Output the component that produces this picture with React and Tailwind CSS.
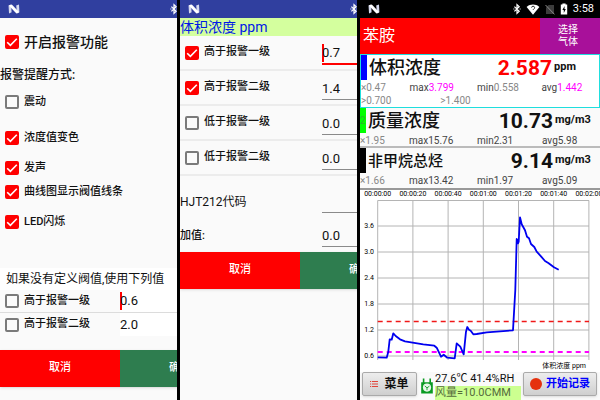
import React from 'react';
import { clsx } from 'clsx';

/* ---------- icons ---------- */

function NougatIcon() {
  return (
    <svg viewBox="0 0 12 10" className="h-[10px] w-3 shrink-0" aria-hidden="true">
      <path d="M0.5 1.6 3 0.6 3.6 8.2 1 9.4Z" fill="#d5d9ee" />
      <path d="M8.2 1.6 11 0.6 11.4 8.2 9 9.4Z" fill="#d5d9ee" />
      <path d="M0.8 1.4 3.8 0.4 11.2 8.2 8.4 9.5Z" fill="#ffffff" />
    </svg>
  );
}

function BluetoothIcon() {
  return (
    <svg viewBox="0 0 8 12" className="h-3 w-2 shrink-0" fill="none" stroke="#fff" strokeWidth="1.2" aria-hidden="true">
      <path d="M1.4 3.6 6.2 8.2 4 10.4V1.6L6.2 3.8 1.4 8.4" />
      <path d="M0.4 6h1M6.6 6h1" />
    </svg>
  );
}

function WifiIcon() {
  return (
    <svg viewBox="0 0 14 11" className="h-[11px] w-[14px]" aria-hidden="true">
      <path d="M0.6 3C4.4-0.2 9.6-0.2 13.4 3L7 10.8Z" fill="#fff" />
      <path d="M5.6 3.6a1.5 1.5 0 1 1 2 1.5L7 5.8" stroke="#000" strokeWidth="0.8" fill="none" />
    </svg>
  );
}

function NoSimIcon() {
  return (
    <svg viewBox="0 0 10 11" className="h-[11px] w-[10px]" aria-hidden="true">
      <path d="M3.5 1H9v9H1V3.5Z" fill="#3c3c3c" />
      <path d="M0.5 1 9.5 10.4" stroke="#8a8a8a" strokeWidth="1" />
    </svg>
  );
}

function BatteryIcon() {
  return (
    <svg viewBox="0 0 8 12" className="h-3 w-2" aria-hidden="true">
      <path d="M2.4 0.6h3.2v1H7.2v10H0.8v-10h1.6Z" fill="#fff" />
      <path d="M4.6 3 2.4 7h1.4v3L5.8 6H4.5Z" fill="#000" />
    </svg>
  );
}

function ListIcon() {
  return (
    <svg viewBox="0 0 8 8" className="h-2 w-2" stroke="#e0443a" strokeWidth="1" aria-hidden="true">
      <path d="M0 1.5h1.2M2 1.5h6M0 4h1.2M2 4h6M0 6.5h1.2M2 6.5h6" />
    </svg>
  );
}

function ClockDeviceIcon() {
  return (
    <svg viewBox="0 0 14 16" className="h-4 w-[14px] shrink-0" aria-hidden="true">
      <path d="M2.8 0.5h1.6v3.7h5V0.5H11v3.7h1.8v11.3H1.2V4.2h1.6Z" fill="#0a9a22" />
      <circle cx="7" cy="9.6" r="4.1" fill="#e9f7ea" />
      <path d="M4.8 8 7 9.8 9.4 8.2M7 9.8v2.4" stroke="#0a9a22" strokeWidth="0.9" fill="none" />
    </svg>
  );
}

/* ---------- shared parts ---------- */

function DialogStatusBar() {
  return (
    <div className="flex h-[18px] items-center bg-[#303f9f] pl-2">
      <NougatIcon />
      <span className="ml-[150px] flex">
        <BluetoothIcon />
      </span>
    </div>
  );
}

function CheckBox({ id, label, checked, large }) {
  return (
    <label htmlFor={id} className={clsx('flex items-center gap-[5px] font-medium', large ? 'text-[14px]' : 'text-[11px]')}>
      <span className="grid">
        <input
          id={id}
          type="checkbox"
          defaultChecked={checked}
          className="peer col-start-1 row-start-1 h-[14px] w-[14px] appearance-none rounded-xs border-2 border-[#7a7a7a] checked:border-[#ff0000] checked:bg-[#ff0000]"
        />
        <svg
          viewBox="0 0 14 14"
          className="pointer-events-none invisible col-start-1 row-start-1 h-[14px] w-[14px] peer-checked:visible"
          fill="none"
          stroke="#fff"
          strokeWidth="1.6"
          aria-hidden="true"
        >
          <path d="M2.2 7.2 5.4 10.3 11.8 3.8" />
        </svg>
      </span>
      {label}
    </label>
  );
}

function NumberField({ label, value, focused, className }) {
  return (
    <div className={clsx('flex min-w-0 flex-1 items-center', className)}>
      {focused && <span className="-mr-[2px] h-[18px] w-[2px] shrink-0 bg-[#ff0000]" />}
      <input
        type="text"
        aria-label={label}
        defaultValue={value}
        className="w-full min-w-0 bg-transparent text-[13px] leading-[18px] text-[#111] outline-none"
      />
    </div>
  );
}

function DialogButtons() {
  return (
    <div className="flex h-[37px] text-[11px] font-medium text-white shadow-sm">
      <button type="button" className="flex-1 bg-[#ff0000]">取消</button>
      <button type="button" className="flex-1 bg-[#2e7d4f]">确定</button>
    </div>
  );
}

/* ---------- alarm settings ---------- */

function AlarmSettings() {
  return (
    <section className="overflow-hidden bg-[#fafafa]">
      <div className="w-[240px]">
        <DialogStatusBar />
        <div className="flex h-12 items-center pl-[5px]">
          <CheckBox id="enable" label="开启报警功能" checked large />
        </div>
        <h2 className="h-[18px] text-[12px] leading-[18px] font-medium">报警提醒方式:</h2>
        <div className="flex h-9 items-center pl-[5px]">
          <CheckBox id="vibrate" label="震动" />
        </div>
        <div className="flex h-9 items-center pl-[5px]">
          <CheckBox id="color" label="浓度值变色" checked />
        </div>
        <div className="flex h-6 items-center pl-[5px]">
          <CheckBox id="sound" label="发声" checked />
        </div>
        <div className="flex h-6 items-center pl-[5px]">
          <CheckBox id="lines" label="曲线图显示阀值线条" checked />
        </div>
        <div className="flex h-9 items-center pl-[5px]">
          <CheckBox id="led" label="LED闪烁" checked />
        </div>

        <p className="mt-7 h-[22px] bg-white pl-[6px] text-[12px] leading-[22px]">如果没有定义阀值,使用下列值</p>
        <div className="flex h-[23px] items-center border-b border-[#dcdcdc] pl-[5px]">
          <div className="w-[115px]">
            <CheckBox id="default-high1" label="高于报警一级" />
          </div>
          <NumberField label="高于报警一级" value="0.6" focused className="h-full bg-white" />
        </div>
        <div className="mb-[14px] flex h-[23px] items-center pl-[5px]">
          <div className="w-[115px]">
            <CheckBox id="default-high2" label="高于报警二级" />
          </div>
          <NumberField label="高于报警二级" value="2.0" className="h-full bg-white" />
        </div>
        <DialogButtons />
      </div>
    </section>
  );
}

/* ---------- channel settings ---------- */

const LIMITS = [
  { id: 'high1', label: '高于报警一级', value: '0.7', checked: true, focused: true },
  { id: 'high2', label: '高于报警二级', value: '1.4', checked: true },
  { id: 'low1', label: '低于报警一级', value: '0.0' },
  { id: 'low2', label: '低于报警二级', value: '0.0' },
];

function ChannelSettings() {
  return (
    <section className="overflow-hidden bg-[#fafafa]">
      <div className="w-[240px]">
        <DialogStatusBar />
        <h2 className="h-[18px] bg-[#d4ff9e] text-[14px] leading-[18px] text-[#0019e6]">体积浓度 ppm</h2>
        {LIMITS.map((row) => (
          <div key={row.id} className="flex h-[35px] items-center border-b-2 border-[#ececec] pl-[5px]">
            <div className="w-[137px]">
              <CheckBox id={row.id} label={row.label} checked={row.checked} />
            </div>
            <NumberField
              label={row.label}
              value={row.value}
              focused={row.focused}
              className={clsx('mt-[3px] h-[22px]', row.focused ? 'border-b-2 border-[#ff0000]' : 'border-b border-[#8a8a8a]')}
            />
          </div>
        ))}
        <div className="flex h-[37px] items-end">
          <span className="w-[142px] pb-[2px] text-[12px] leading-[18px]">HJT212代码</span>
          <NumberField label="HJT212代码" value="" className="h-[22px] border-b border-[#8a8a8a]" />
        </div>
        <div className="mb-[5px] flex h-[34px] items-end">
          <span className="w-[142px] pb-[2px] text-[11px] leading-[18px] font-medium">加值:</span>
          <NumberField label="加值" value="0.0" className="h-[22px] border-b border-[#8a8a8a]" />
        </div>
        <DialogButtons />
      </div>
    </section>
  );
}

/* ---------- live monitor ---------- */

function Stats({ cf, max, min, avg, highlight }) {
  const color = highlight ? 'text-[#f0f]' : '';
  return (
    <div className="mt-px grid h-[14px] grid-cols-[49fr_68fr_65fr_58fr] text-[10px] leading-[14px] text-[#444]">
      <span className="text-[#888]">×{cf}</span>
      <span>max<b className={clsx('font-normal', color)}>{max}</b></span>
      <span>min<b className={clsx('font-normal', highlight && 'text-[#888]')}>{min}</b></span>
      <span>avg<b className={clsx('font-normal', color)}>{avg}</b></span>
    </div>
  );
}

function Reading({ name, value, unit, mark, barClass, nameClass, valueClass }) {
  return (
    <div className="flex h-[25px] items-center">
      <span className={clsx('flex h-full w-[6px] items-center text-[10px]', barClass)}>{mark}</span>
      <h3 className={clsx('ml-[2px] leading-6 font-medium', nameClass)}>{name}</h3>
      <span className={clsx('ml-auto text-[21px] leading-6 font-bold', valueClass)}>{value}</span>
      <span className="ml-[2px] w-[45px] text-[11px] font-bold">{unit}</span>
    </div>
  );
}

const TIMES = ['00:00:00', '00:00:20', '00:00:40', '00:01:00', '00:01:20', '00:01:40', '00:02:00'];
const LEVELS = ['3.6', '3.0', '2.4', '1.8', '1.2', '0.6'];
const TRACE = [
  [17.7, 167.3], [26.7, 167.7], [28.3, 161.7], [29.7, 149.3], [31.7, 149.7], [33.3, 143.3], [35.7, 146],
  [40, 149.3], [45, 151.3], [63.3, 154.3], [74.3, 155.7], [76.7, 157.7], [81, 166.7], [83.7, 164.7],
  [87.3, 167.7], [94.7, 168.3], [96.7, 153.3], [100.3, 156.7], [103.7, 164.3], [106, 141.7], [107.3, 137],
  [109, 139.7], [110.7, 140.7], [113.3, 144.3], [116.7, 144], [126.7, 142.3], [153, 140.3], [155.3, 100],
  [156.7, 49], [157.3, 50], [158, 53.3], [158.7, 51.7], [160, 27.3], [161.7, 34.3], [165, 40.3], [167, 46.7],
  [169, 48.3], [171, 54], [174.3, 57], [176.7, 61.7], [181, 66.3], [185, 71], [188.3, 73], [194, 77.3], [198.7, 79.7],
];

function TrendChart() {
  return (
    <svg viewBox="0 0 240 182" className="block w-full bg-white" role="img" aria-label="体积浓度 ppm">
      <g stroke="#b4b4b4" strokeWidth="1">
        {TIMES.map((t, i) => (
          <path key={t} d={`M${17.7 + i * 35.2} 10.5V170`} />
        ))}
        <path d="M17.7 10.5H229" />
        {LEVELS.map((l, i) => (
          <path key={l} d={`M17.7 ${36 + i * 26}H229`} />
        ))}
      </g>
      <g fontSize="7" fill="#000">
        {TIMES.map((t, i) => (
          <text key={t} x={17.7 + i * 35.2} y="6" textAnchor="middle">{t}</text>
        ))}
        {LEVELS.map((l, i) => (
          <text key={l} x="14" y={38 + i * 26} textAnchor="end">{l}</text>
        ))}
        <text x="226" y="178" textAnchor="end">体积浓度 ppm</text>
      </g>
      <path d="M17.7 131.5H229" stroke="#f01818" strokeWidth="1.5" strokeDasharray="5 4" />
      <path d="M17.7 162H229" stroke="#f0f" strokeWidth="1.8" strokeDasharray="5 4" />
      <polyline points={TRACE.map((p) => p.join(',')).join(' ')} fill="none" stroke="#0000f0" strokeWidth="1.8" strokeLinejoin="round" />
    </svg>
  );
}

function Monitor() {
  return (
    <section className="flex flex-col overflow-hidden bg-[#fafafa]">
      <div className="flex h-[18px] items-center bg-black pr-[6px] pl-2 text-[11px] text-white">
        <NougatIcon />
        <div className="ml-auto flex items-center gap-[5px]">
          <BluetoothIcon />
          <WifiIcon />
          <NoSimIcon />
          <BatteryIcon />
          <span>3:58</span>
        </div>
      </div>

      <header className="flex h-9 text-white">
        <h1 className="flex-1 bg-[#ff0000] pl-[3px] text-[16px] leading-9">苯胺</h1>
        <button type="button" className="w-[60px] bg-[#a8109a] pr-1 text-[10px] leading-3">
          选择<br />气体
        </button>
      </header>

      <article className="h-[54px] border border-[#1fdede] bg-white">
        <Reading name="体积浓度" value="2.587" unit="ppm" barClass="bg-[#0000ff]" nameClass="text-[18px]" valueClass="text-[#ff0000]" />
        <Stats cf="0.47" max="3.799" min="0.558" avg="1.442" highlight />
        <div className="flex h-3 text-[10px] leading-3 text-[#888]">
          <span className="w-1/3">&gt;0.700</span>
          <span>&gt;1.400</span>
        </div>
      </article>
      <article className="h-10 border-b-2 border-[#bbb]">
        <Reading name="质量浓度" value="10.73" unit="mg/m3" mark="2" barClass="bg-[#00ff00] text-[#2bb52b]" nameClass="text-[18px]" />
        <Stats cf="1.95" max="15.76" min="2.31" avg="5.98" />
      </article>
      <article className="h-[42px] border-b-2 border-[#999]">
        <Reading name="非甲烷总烃" value="9.14" unit="mg/m3" barClass="bg-black" nameClass="text-[15px]" />
        <Stats cf="1.66" max="13.42" min="1.97" avg="5.09" />
      </article>

      <TrendChart />

      <footer className="flex flex-1 items-start pr-[3px] pl-[2px]">
        <button
          type="button"
          className="flex h-6 w-[55px] shrink-0 items-center justify-center gap-[6px] rounded-xs border border-[#aaa] bg-linear-to-b from-[#ededed] to-[#cfcfcf] text-[12px] font-bold shadow-sm"
        >
          <ListIcon />
          菜单
        </button>
        <div className="ml-[3px] flex min-w-0 flex-1 items-center gap-px">
          <ClockDeviceIcon />
          <div className="flex-1 text-[11px] leading-[14px] whitespace-nowrap">
            <p>27.6℃ 41.4%RH</p>
            <p className="bg-[#ccff90] text-[#556b3c]">风量=10.0CMM</p>
          </div>
        </div>
        <button
          type="button"
          className="ml-[2px] flex h-6 w-[74px] shrink-0 items-center justify-center gap-1 rounded-xs border border-[#aaa] bg-linear-to-b from-[#ededed] to-[#cfcfcf] text-[11px] font-bold whitespace-nowrap text-[#0000ff] shadow-sm"
        >
          <span className="h-3 w-3 rounded-full bg-[#e5310e]" />
          开始记录
        </button>
      </footer>
    </section>
  );
}

export default function App() {
  return (
    <main className="grid min-h-screen grid-cols-[177fr_177fr_240fr] gap-[3px] bg-black font-['Roboto','Noto_Sans_CJK_SC',sans-serif] text-[#111]">
      <AlarmSettings />
      <ChannelSettings />
      <Monitor />
    </main>
  );
}
